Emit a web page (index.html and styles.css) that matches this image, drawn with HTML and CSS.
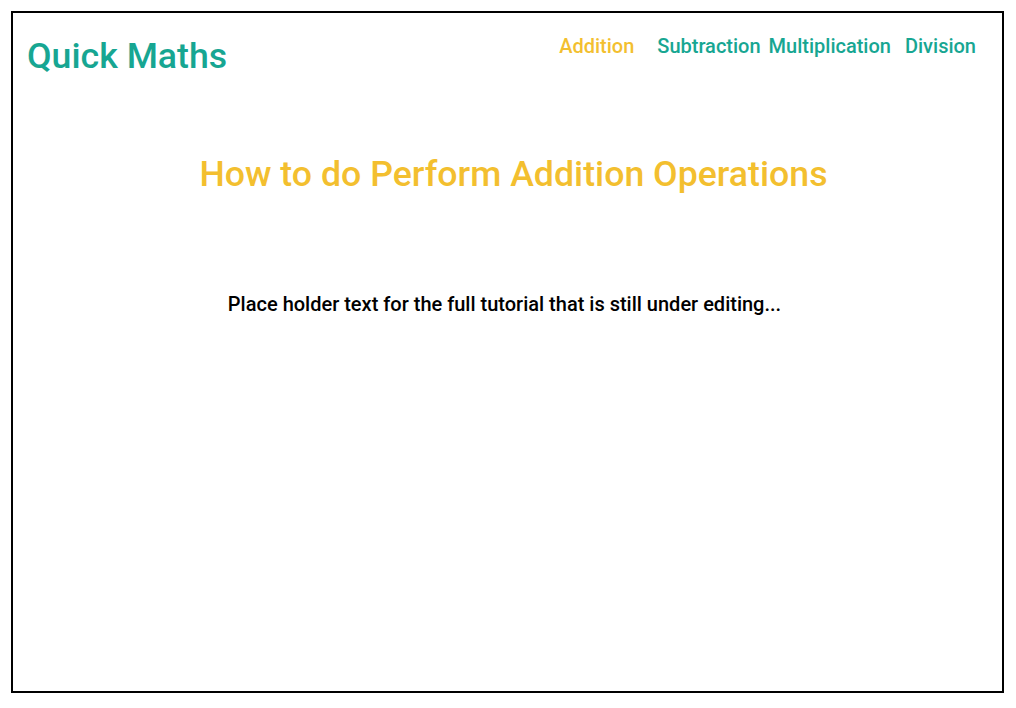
FILE: index.html
```html
<!DOCTYPE html>
<html lang="en">
<head>
<meta charset="utf-8">
<title>Quick Maths</title>
<link rel="stylesheet" href="styles.css">
</head>
<body>
<div class="frame">
  <header class="topbar">
    <div class="brand">Quick Maths</div>
    <nav class="nav">
      <a class="nav-link active nav-add" href="#">Addition</a>
      <a class="nav-link nav-sub" href="#">Subtraction</a>
      <a class="nav-link nav-mul" href="#">Multiplication</a>
      <a class="nav-link nav-div" href="#">Division</a>
    </nav>
  </header>
  <main class="content">
    <h1 class="title">How to do Perform Addition Operations</h1>
    <p class="body-text">Place holder text for the full tutorial that is still under editing...</p>
  </main>
</div>
</body>
</html>
```
FILE: styles.css
```css
html, body {
  margin: 0;
  padding: 0;
  background: #ffffff;
}
body {
  padding: 11px 12px 15px 11px;
  font-family: Roboto, "Liberation Sans", Arial, sans-serif;
}
.frame {
  box-sizing: border-box;
  height: 682px;
  border: 2px solid #000000;
  display: flex;
  flex-direction: column;
}
.topbar {
  display: flex;
  justify-content: space-between;
  align-items: flex-start;
  padding: 20px 26px 0 14px;
}
.brand {
  color: #17a692;
  font-size: 35.7px;
  font-weight: 500;
  line-height: 40px;
  padding-top: 3px;
}
.nav {
  display: flex;
  padding-top: 1px;
}
.nav-link {
  font-size: 20px;
  font-weight: 500;
  line-height: 24px;
  text-decoration: none;
  color: #17a692;
}
.nav-link.active {
  color: #f3bf2f;
}
.nav-add { margin-right: 23px; }
.nav-sub { margin-right: 8px; }
.nav-mul { margin-right: 14px; }
.content {
  display: flex;
  flex-direction: column;
  align-items: center;
}
.title {
  margin: 78px 0 0 0;
  font-weight: 500;
  font-size: 35.7px;
  line-height: 40px;
  color: #f3bf2f;
  padding-left: 12px;
}
.body-text {
  margin: 98px 0 0 0;
  font-size: 20px;
  font-weight: 500;
  line-height: 24px;
  color: #000000;
  padding-right: 6px;
}
```
